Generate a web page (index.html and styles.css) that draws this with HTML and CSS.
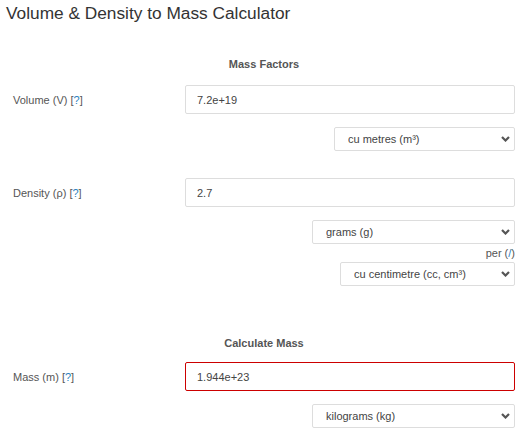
FILE: index.html
```html
<!DOCTYPE html>
<html lang="en">
<head>
    <meta charset="UTF-8">
    <meta name="viewport" content="width=device-width, initial-scale=1">
    <title>Volume & Density to Mass Calculator</title>
    <link rel="stylesheet" href="styles.css">
</head>
<body>
    <h1 class="title">Volume &amp; Density to Mass Calculator</h1>

    <div class="calc">
        <h3 class="section-head first">Mass Factors</h3>

        <div class="field">
            <label for="volume">Volume (V) [<a href="#">?</a>]</label>
            <input type="text" id="volume" value="7.2e+19">
        </div>
        <div class="units">
            <span class="select-box w-volume">
                <select id="volumeUnit">
                    <option>cu metres (m³)</option>
                </select>
                <svg class="chevron" width="9" height="6" viewBox="0 0 9 6"><polyline points="1,1 4.5,4.5 8,1" fill="none" stroke="#555" stroke-width="2.2"/></svg>
            </span>
        </div>

        <div class="field">
            <label for="density">Density (ρ) [<a href="#">?</a>]</label>
            <input type="text" id="density" value="2.7">
        </div>
        <div class="units">
            <span class="select-box w-mass">
                <select id="densityMass">
                    <option>grams (g)</option>
                </select>
                <svg class="chevron" width="9" height="6" viewBox="0 0 9 6"><polyline points="1,1 4.5,4.5 8,1" fill="none" stroke="#555" stroke-width="2.2"/></svg>
            </span>
            <span class="per">per (<a href="#">/</a>)</span>
            <span class="select-box w-per">
                <select id="densityVolume">
                    <option>cu centimetre (cc, cm³)</option>
                </select>
                <svg class="chevron" width="9" height="6" viewBox="0 0 9 6"><polyline points="1,1 4.5,4.5 8,1" fill="none" stroke="#555" stroke-width="2.2"/></svg>
            </span>
        </div>

        <h3 class="section-head result">Calculate Mass</h3>

        <div class="field">
            <label for="mass">Mass (m) [<a href="#">?</a>]</label>
            <input type="text" id="mass" class="answer" value="1.944e+23">
        </div>
        <div class="units">
            <span class="select-box w-mass">
                <select id="massUnit">
                    <option>kilograms (kg)</option>
                </select>
                <svg class="chevron" width="9" height="6" viewBox="0 0 9 6"><polyline points="1,1 4.5,4.5 8,1" fill="none" stroke="#555" stroke-width="2.2"/></svg>
            </span>
        </div>
    </div>
</body>
</html>
```

FILE: styles.css
```css
body {
    margin: 0;
    padding: 3px 8px 0 6px;
    font-family: "Liberation Sans", Arial, sans-serif;
    color: #555;
    background-color: #fff;
}
.title {
    margin: 0;
    font-size: 17.3px;
    font-weight: normal;
    line-height: 20px;
    color: #333;
}
.calc {
    padding-left: 7px;
}
.section-head {
    margin: 0;
    font-size: 11px;
    line-height: 13px;
    font-weight: bold;
    text-align: center;
    color: #555;
}
.section-head.first {
    margin: 35px 0 14px;
}
.section-head.result {
    margin: 51px 0 12px;
}
.field {
    display: grid;
    grid-template-columns: 172px 1fr;
    align-items: center;
}
label {
    font-size: 11px;
    color: #555;
}
a {
    color: #2a7fc1;
    text-decoration: none;
}
input {
    box-sizing: border-box;
    width: 100%;
    height: 29px;
    margin: 0;
    padding: 0 11px;
    border: 1px solid #ddd;
    border-radius: 2px;
    font-family: inherit;
    font-size: 11px;
    color: #444;
    outline: none;
}
input.answer {
    border-color: #c00;
}
.units {
    display: flex;
    flex-direction: column;
    align-items: flex-end;
    margin: 13px 0 27px;
}
.select-box {
    position: relative;
    display: block;
}
select {
    appearance: none;
    -webkit-appearance: none;
    box-sizing: border-box;
    width: 100%;
    height: 24px;
    margin: 0;
    padding: 0 0 0 13px;
    border: 1px solid #ddd;
    border-radius: 2px;
    background-color: #fff;
    font-family: inherit;
    font-size: 11px;
    color: #444;
    outline: none;
}
.chevron {
    position: absolute;
    right: 5px;
    top: 9px;
    pointer-events: none;
}
.w-volume {
    width: 181px;
}
.w-mass {
    width: 203px;
}
.w-per {
    width: 175px;
}
.per {
    margin: 3px 0 2px;
    font-size: 11px;
    line-height: 13px;
    color: #555;
}
```
